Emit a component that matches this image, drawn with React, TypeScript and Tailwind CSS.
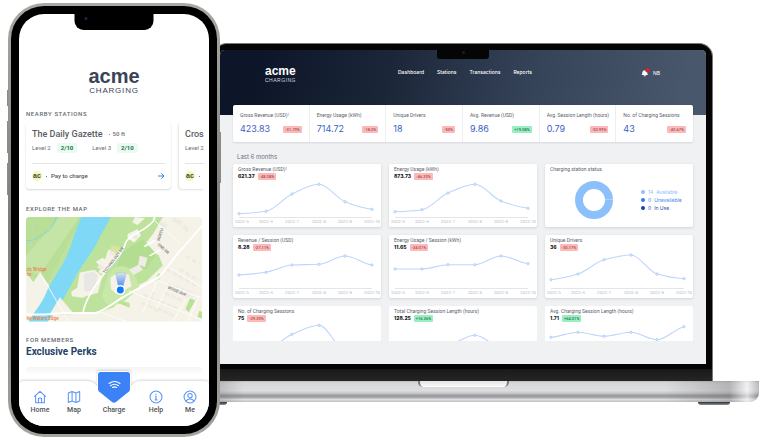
import type { ReactNode } from "react";

const MONTHS = ["2022-5", "2022-6", "2022-7", "2022-8", "2022-9", "2022-10"];
const CHART_X = [6, 33, 59, 86, 112, 139];

type Tone = "down" | "up";

const stats: { label: string; note?: string; value: string; change: string; tone: Tone }[] = [
  { label: "Gross Revenue (USD)", note: "1", value: "423.83", change: "-31.79%", tone: "down" },
  { label: "Energy Usage (kWh)", value: "714.72", change: "-18.2%", tone: "down" },
  { label: "Unique Drivers", value: "18", change: "-50%", tone: "down" },
  { label: "Avg. Revenue (USD)", value: "9.86", change: "+19.08%", tone: "up" },
  { label: "Avg. Session Length (hours)", value: "0.79", change: "-53.99%", tone: "down" },
  { label: "No. of Charging Sessions", value: "43", change: "-42.67%", tone: "down" },
];

type Trend = { label: string; note?: string; value: string; change: string; tone: Tone; points: number[]; peek?: boolean };

const trends: Trend[] = [
  { label: "Gross Revenue (USD)", note: "1", value: "621.37", change: "-48.38%", tone: "down", points: [49.7, 47.3, 30, 20.3, 37.7, 45.3] },
  { label: "Energy Usage (kWh)", value: "873.73", change: "-46.23%", tone: "down", points: [47.7, 45.7, 29, 20.3, 37, 44.3] },
  { label: "Revenue / Session (USD)", value: "8.28", change: "-27.11%", tone: "down", points: [40, 37.3, 30, 29.3, 21, 30] },
  { label: "Energy Usage / Session (kWh)", value: "11.65", change: "-24.01%", tone: "down", points: [34, 34, 29.7, 29.7, 21, 28.7] },
  { label: "Unique Drivers", value: "36", change: "-30.77%", tone: "down", points: [44.7, 39, 24.7, 20, 39, 43.7] },
  { label: "No. of Charging Sessions", value: "75", change: "-29.25%", tone: "down", points: [47, 44, 28.3, 19.3, 45, 49], peek: true },
  { label: "Total Charging Session Length (hours)", value: "128.25", change: "+16.26%", tone: "up", points: [48, 46, 40, 29.3, 42, 46], peek: true },
  { label: "Avg. Charging Session Length (hours)", value: "1.71", change: "+64.31%", tone: "up", points: [31.3, 26.3, 30.3, 26.3, 33.7, 20.7], peek: true },
];

const legend = [
  { count: 14, label: "Available", dot: "bg-[#8cc0fb]", text: "text-[#8cc0fb]" },
  { count: 0, label: "Unavailable", dot: "bg-[#3478f0]", text: "text-[#3f7ff0]" },
  { count: 0, label: "In Use", dot: "bg-[#1e3fa8]", text: "text-[#2b4aa8]" },
];

/* Monotone cubic curve through the points of one series. */
function curve(ys: number[]): string {
  const n = ys.length;
  const slope = (i: number) => (ys[i + 1] - ys[i]) / (CHART_X[i + 1] - CHART_X[i]);
  const tangent = (i: number) => {
    if (i === 0) return slope(0) / 2;
    if (i === n - 1) return slope(n - 2) / 2;
    const a = slope(i - 1);
    const b = slope(i);
    if (a * b <= 0) return 0;
    return (2 * a * b) / (a + b);
  };
  let d = `M${CHART_X[0]},${ys[0]}`;
  for (let i = 0; i < n - 1; i++) {
    const dx = (CHART_X[i + 1] - CHART_X[i]) / 3;
    d += `C${CHART_X[i] + dx},${ys[i] + tangent(i) * dx} ${CHART_X[i + 1] - dx},${ys[i + 1] - tangent(i + 1) * dx} ${CHART_X[i + 1]},${ys[i + 1]}`;
  }
  return d;
}

function Badge({ tone, children }: { tone: Tone; children: ReactNode }) {
  const colours = tone === "up" ? "bg-[#9aeec2] text-[#20744a]" : "bg-[#fbb9b9] text-[#a8484c]";
  return (
    <span className={`rounded-[1px] px-[2px] font-['Roboto','Liberation_Sans',sans-serif] text-[4px] leading-[7px] font-medium ${colours}`}>
      {children}
    </span>
  );
}

function Label({ text, note }: { text: string; note?: string }) {
  return (
    <h3 className="font-['Roboto','Liberation_Sans',sans-serif] text-[5px] leading-[6px] whitespace-nowrap text-[#5b616c]">
      {text}
      {note && <sup className="text-[3px]">{note}</sup>}
    </h3>
  );
}

function TrendCard({ trend }: { trend: Trend }) {
  return (
    <article
      className={`relative bg-white ${trend.peek ? "rounded-t-[2px]" : "rounded-[2px] shadow-[0_1px_3px_rgba(15,23,42,0.14)]"}`}
    >
      <svg viewBox={trend.peek ? "0 0 148 35" : "0 0 148 63"} className="block w-full" role="img" aria-label={trend.label}>
        <path d={curve(trend.points)} fill="none" stroke="#bdd6fb" strokeWidth="1.1" />
        {trend.points.map((y, i) => (
          <circle key={i} cx={CHART_X[i]} cy={y} r="1.2" fill="#dbe9fd" stroke="#a9c9fa" strokeWidth="0.7" />
        ))}
        {!trend.peek && (
          <>
            <path d="M6 53.5H139" stroke="#e4e5e8" strokeWidth="1" />
            {MONTHS.map((m, i) => (
              <text key={m} x={i === 0 ? 9 : CHART_X[i]} y="59" textAnchor="middle" fontSize="4" fill="#b4b7bd">
                {m}
              </text>
            ))}
          </>
        )}
      </svg>
      <div className="absolute top-[2px] left-[5px]">
        <Label text={trend.label} note={trend.note} />
        <p className="flex items-center gap-[3px] pt-px">
          <strong className="text-[5px] leading-[7px] font-extrabold text-[#14171c]">{trend.value}</strong>
          <Badge tone={trend.tone}>{trend.change}</Badge>
        </p>
      </div>
    </article>
  );
}

function StatusCard() {
  return (
    <article className="flex flex-col rounded-[2px] bg-white px-[5px] pt-[2px] shadow-[0_1px_3px_rgba(15,23,42,0.14)]">
      <Label text="Charging station status" />
      <div className="flex items-center gap-7 pt-[9px] pl-[25px]">
        <svg viewBox="0 0 38 38" className="size-[38px]" role="img" aria-label="14 stations available">
          <circle cx="19" cy="19" r="15" fill="none" stroke="#8cc0fb" strokeWidth="8" />
          <path d="M30 18.5H38" stroke="#c5dffc" strokeWidth="0.6" />
        </svg>
        <ul className="flex flex-col gap-px text-[5px] leading-[7px]">
          {legend.map((l) => (
            <li key={l.label} className={`flex items-center gap-[3px] whitespace-nowrap ${l.text}`}>
              <span className={`size-1 rounded-full ${l.dot}`} />
              <span>{l.count}</span>
              <span>{l.label}</span>
            </li>
          ))}
        </ul>
      </div>
    </article>
  );
}

function Dashboard() {
  return (
    <div className="overflow-hidden rounded-t-[5px] bg-[#f0f1f3] pb-[23px] font-['Inter','Liberation_Sans',sans-serif]">
      <header className="flex h-[65px] items-start bg-[linear-gradient(100deg,#0d1629_8%,#1c2639_35%,#36445a_65%,#48576c_95%)] pt-[15px] pr-[46px] pl-[45px] text-white">
        <div className="w-[133px] font-['Liberation_Sans',Arial,sans-serif]">
          <p className="text-[12px] leading-[12px] font-bold">acme</p>
          <p className="text-[5px] leading-[6px] tracking-widest text-[#d5d9e0]">CHARGING</p>
        </div>
        <nav className="flex flex-1 gap-[13px] pt-[3px] text-[5px] leading-[8px] font-medium">
          <a href="#dashboard">Dashboard</a>
          <a href="#stations">Stations</a>
          <a href="#transactions">Transactions</a>
          <a href="#reports">Reports</a>
        </nav>
        <div className="flex items-center gap-[3px] pt-[3px] text-[5px] leading-[8px]">
          <button type="button" aria-label="Notifications">
            <svg viewBox="0 0 16 16" className="size-[9px]">
              <path d="M1 12.500C2.500 11 2 9 2.500 7A4.500 4.500 0 0 1 11 7c.5 2 0 4 1.500 5.500z" fill="#fff" />
              <path d="M4.800 13a2 2 0 0 0 4 0z" fill="#fff" />
              <circle cx="11.500" cy="4" r="4" fill="#d4252b" />
            </svg>
          </button>
          <span>NB</span>
        </div>
      </header>

      <main className="px-[13px]">
        <section className="-mt-[10px] grid grid-cols-6 divide-x divide-[#eceef0] rounded-[2px] bg-white shadow-[0_1px_2px_rgba(15,23,42,0.12)]">
          {stats.map((s) => (
            <div key={s.label} className="px-[7px] py-[7px]">
              <Label text={s.label} note={s.note} />
              <p className="flex items-center justify-between pt-[5px]">
                <span className="text-[9px] leading-[12px] text-[#3b5fc4]">{s.value}</span>
                <Badge tone={s.tone}>{s.change}</Badge>
              </p>
            </div>
          ))}
        </section>

        <h2 className="pt-[11px] pb-[3px] pl-1 text-[6px] leading-[8px] text-[#6b7280]">Last 6 months</h2>
        <section className="grid grid-cols-3 gap-2">
          <TrendCard trend={trends[0]} />
          <TrendCard trend={trends[1]} />
          <StatusCard />
          {trends.slice(2).map((t) => (
            <TrendCard key={t.label} trend={t} />
          ))}
        </section>
      </main>
    </div>
  );
}

function Laptop() {
  return (
    <div className="-ml-[53px] flex-1 pt-10">
      <div className="relative mx-[46px] rounded-t-[14px] border border-b-0 border-[#77797c] bg-[#050505] px-[6px] pt-[6px]">
        <Dashboard />
        <div className="absolute top-[6px] left-1/2 flex h-[9px] w-[52px] -translate-x-1/2 justify-center rounded-b-[3px] bg-[#050505] pt-px">
          <span className="size-[3px] rounded-full bg-[#1b1e22]" />
        </div>
        <div className="-mx-[6px] mt-[5px] h-3 bg-linear-to-b from-[#191919] to-[#252525]" />
      </div>
      <div className="flex h-[21px] justify-center rounded-b-[9px] bg-[linear-gradient(90deg,rgba(70,70,74,0.25)_8%,transparent_13%,transparent_84%,rgba(70,70,74,0.25)_95%,rgba(255,255,255,0.6)_98%,rgba(90,90,94,0.25)_100%),linear-gradient(180deg,#b9babc_0%,#d6d7d9_8%,#dedee0_45%,#c8c9cc_58%,#97989c_70%,#a6a7ab_78%,#dfdfe2_88%,#bfc0c3_100%)]">
        <div className="h-[6px] w-[91px] rounded-b-[5px] border-x-2 border-[#77787b] bg-linear-to-b from-[#e4e4e6] to-[#fbfbfb]" />
      </div>
      <div className="flex justify-between pr-[29px] pl-[28px]">
        <span className="h-[3px] w-8 rounded-b-[3px] bg-linear-to-b from-[#2c2f33] to-[#8f9296]" />
        <span className="h-[3px] w-8 rounded-b-[3px] bg-linear-to-b from-[#2c2f33] to-[#8f9296]" />
      </div>
    </div>
  );
}

function Eyebrow({ children }: { children: ReactNode }) {
  return <h2 className="text-[6px] leading-[8px] font-medium tracking-widest text-[#666a70]">{children}</h2>;
}

function BrandDot() {
  return (
    <span className="flex size-[10px] items-center justify-center rounded-full bg-[#f5f8b4] font-['Liberation_Sans',Arial,sans-serif] text-[7px] leading-[8px] font-bold text-[#3d4453]">
      ac
    </span>
  );
}

function StationCard() {
  return (
    <article className="w-[145px] shrink-0 rounded-[4px] bg-white px-[6px] pt-[6px] pb-2 text-[6px] leading-[10px] text-[#6d7075] shadow-[0_1px_2px_rgba(0,0,0,0.16)]">
      <div className="flex items-center gap-[6px]">
        <h3 className="text-[9px] leading-[12px] font-medium whitespace-nowrap text-[#5a5d62]">The Daily Gazette</h3>
        <span className="flex items-center gap-[3px] font-medium whitespace-nowrap">
          <span className="size-px rounded-full bg-[#6d7075]" />
          50 ft
        </span>
      </div>
      <div className="flex gap-[15px] pt-[3px] pb-[10px]">
        {["Level 2", "Level 3"].map((level) => (
          <p key={level} className="flex gap-[6px] whitespace-nowrap">
            {level}
            <span className="rounded-[2px] bg-[#e9fcf1] px-1 font-bold text-[#24704b]">2/10</span>
          </p>
        ))}
      </div>
      <div className="flex items-center border-t border-[#e3e4e6] pt-[7px]">
        <BrandDot />
        <span className="flex flex-1 items-center gap-1 pl-1 font-medium text-[#505358]">
          <span className="size-px rounded-full bg-[#505358]" />
          Pay to charge
        </span>
        <svg viewBox="0 0 8 8" className="size-2" fill="none" stroke="#3b82f6" strokeWidth="1">
          <path d="M1 4h6M4.300 1.400 7 4 4.300 6.600" />
        </svg>
      </div>
    </article>
  );
}

/* Leading edge of the next card in the carousel. */
function NextStationCard() {
  return (
    <article className="flex-1 rounded-l-[4px] bg-white pt-[6px] pb-2 pl-[6px] text-[6px] leading-[10px] whitespace-nowrap text-[#6d7075] shadow-[-1px_1px_2px_rgba(0,0,0,0.12)]">
      <h3 className="text-[9px] leading-[12px] font-medium text-[#5a5d62]">Cros</h3>
      <p className="pt-[3px] pb-[10px]">Level 2</p>
      <div className="flex items-center gap-1 border-t border-[#e3e4e6] pt-[7px]">
        <BrandDot />
        <span className="size-px rounded-full bg-[#505358]" />
      </div>
    </article>
  );
}

function TownMap() {
  return (
    <svg viewBox="78 33 530 315" className="block w-full rounded-[4px]" role="img" aria-label="Map of nearby stations">
      <rect x="78" y="33" width="530" height="315" fill="#f5f2e8" />
      <path d="M78 33h412l-26 46-30 40 44 30 12 30-48 46-66 34-34 46-52 18-110 4-40-60-20-12-42-55z" fill="#bde29c" />
      <path d="M78 33h170L140 235 78 190z" fill="#b9df97" />
      <path d="M180 33 78 150v40l40 20 120-177z" fill="#c5e5a6" />
      <path d="M78 103c30 4 38-12 50-18 14-6 22-12 30-24l12-28" fill="none" stroke="#83d3dc" strokeWidth="3" />
      <path d="M98 33v60l-14 80" fill="none" stroke="#cfd9c0" strokeWidth="1.500" />
      <path d="M120 200 78 262v86h50l26-100z" fill="#f5f2e8" />
      <path d="M364 140l66-40 40 44-30 46-44-2-54 30z" fill="#b3dd90" />
      <path d="M246 33h86c-8 26-26 44-36 70-12 28-50 74-68 108-14 28-36 66-48 88-12 20-26 34-36 49H86c16-30 42-56 54-90 18-40 52-82 66-120 14-34 22-74 40-105z" fill="#7fd8f5" />
      <path d="M180 275l40 46-60 4-8-4z" fill="#f5f2e8" />
      <path d="M240 200l44-8 24 20-14 50-32 8-14 6-32-4-2-14 18-12z" fill="#f5f2e8" />
      <path d="M252 204l28-6 14 10-10 46-30 4z" fill="#e9e7e4" />
      <path d="M288 168l20-12 8 4 10-28 22-6 18 14-30 40-24 26-16-6 8-16z" fill="#f5f2e8" />
      <path d="M336 118l28 6-12 24-22-10z" fill="#d9e3a4" />
      <path d="M384 84l30-14 10 18-20 22-20-12z" fill="#f7f5ed" />
      <path d="M406 33l30 4-22 20-16-8z" fill="#f5f2e8" />
      <path d="M326 206c20-34 60-30 78-4l16 44-48 44-44 14-22-30z" fill="#c9e7a8" />
      <path d="M332 216c18-16 40-20 56-8l8 34-48 22-14-14z" fill="#f5f2e8" />
      <path d="M388 192l30-16 12 16-28 16zM420 150l24 6-8 28-20-8z" fill="#efece6" />
      <path d="M572 278l16 6-20 36-10-10zM600 315l8 4v20l-14-4zM486 205l-10 24-8-6 8-20zM350 282l40 10v14l-30-12z" fill="#b9e296" />
      <g fill="none" stroke="#eeebe3" strokeWidth="9">
        <path d="M432 268l60 26M426 292l50 22M462 258l-18 36M496 262l54 24M484 288l54 24M474 308l50 22M520 250l60 26M504 236l80 26" strokeDasharray="16 4" />
        <path d="M540 190l50 30M500 190l90 50M560 150l40 26" strokeDasharray="14 8" />
        <path d="M480 50l22 12M520 40l28 12M552 60l14 14M400 88l14 8M296 180l14 8M330 140l14 6" strokeWidth="13" />
      </g>
      <g fill="none" stroke="#fff" strokeWidth="4">
        <path d="M78 326c60 4 90-4 120-4h90c30-8 60-36 90-52l100-56c30-30 48-66 76-92l54-62" strokeWidth="6" />
        <path d="M250 320c8-44 40-86 60-112 22-30 60-62 68-98 10-24 60-34 84-66l4-11" strokeWidth="5" />
        <path d="M388 256l220 86M470 222l138 56M510 185l98 60M478 215l-14 32-36 74M600 270l-36 78M460 36c20 30 70 60 82 78M560 280l-40 68M500 250l-30 60M300 318l80 30M120 200l58 100 30 48" strokeWidth="2.500" />
        <path d="M434 122l32-18M450 150l32-18" strokeWidth="5" />
      </g>
      <g fontFamily="Roboto, sans-serif" fontSize="12" fontWeight="500" fill="#77777c">
        <text x="316" y="204" transform="rotate(-53 316 204)">TECHNOLOGY DR</text>
        <text x="504" y="248" transform="rotate(24 504 248)">WOOD AVE</text>
        <text x="480" y="106" transform="rotate(-72 480 106)">NORTH</text>
        <text x="474" y="118" transform="rotate(42 474 118)">END DR</text>
      </g>
      <g fontFamily="Roboto, sans-serif" fontSize="14" fontWeight="500" fill="#f0804a">
        <text x="80" y="196">n's Bridge</text>
        <text x="80" y="211">ns</text>
        <text x="80" y="344">he Waters Edge</text>
      </g>
      <defs>
        <linearGradient id="beam" x1="0" y1="0" x2="0" y2="1">
          <stop offset="0" stopColor="#3b82f6" stopOpacity="0.1" />
          <stop offset="1" stopColor="#3b82f6" stopOpacity="0.9" />
        </linearGradient>
      </defs>
      <path d="M346 202q18-8 36 0l-12 42h-14z" fill="url(#beam)" />
      <circle cx="362" cy="253" r="15" fill="#fff" />
      <circle cx="362" cy="253" r="10.500" fill="#0f7af5" />
    </svg>
  );
}

const tabs = [
  {
    label: "Home",
    icon: <path d="M1.500 7.500 8 1.500l6.500 6M3 6.300v8.200h10V6.300M6.200 14.500v-5h3.600v5" />,
  },
  {
    label: "Map",
    icon: <path d="M1.500 3.500 5.800 1.800l4.400 1.700 4.300-1.700v10.700l-4.300 1.700-4.400-1.700-4.300 1.700zM5.800 1.800v10.700M10.200 3.500v10.700" />,
  },
  { label: "Charge", icon: null },
  {
    label: "Help",
    icon: (
      <>
        <circle cx="8" cy="8" r="6.800" />
        <path d="M6.800 7.200H8v4M6.600 11.300h3M8 4.400v1.200" />
      </>
    ),
  },
  {
    label: "Me",
    icon: (
      <>
        <circle cx="8" cy="8" r="6.800" />
        <circle cx="8" cy="6.500" r="2.500" />
        <path d="M3.600 13c.6-2 2-2.700 4.400-2.700s3.800.7 4.400 2.700" />
      </>
    ),
  },
];

function TabBar() {
  return (
    <nav className="relative -mt-[4px]">
      <svg viewBox="0 0 190 56" className="absolute inset-x-0 bottom-0 w-full overflow-visible drop-shadow-[0_-1px_1px_rgba(0,0,0,0.16)]" aria-hidden="true">
        <path d="M0 14Q1 11 5 11H69Q73 11 76 14L91 29Q95 33 99 29L114 14Q117 11 121 11H185Q189 11 190 14V56H0z" fill="#fff" />
        <path d="M78 4Q78 1 81 1H109Q112 1 112 4V20Q112 22 110 23L97 33Q95 34 93 33L80 23Q78 22 78 20z" fill="#fff" />
        <path d="M79 4.500Q79 2 81.500 2H108.500Q111 2 111 4.500V19Q111 20.500 110 21.500L97 32Q95 33.500 93 32L80 21.500Q79 20.500 79 19z" fill="#3b82f6" />
        <g fill="none" stroke="#fff" strokeWidth="1.100" strokeLinecap="round">
          <path d="M90 13.500Q95.500 9.500 101 13.500M91.500 15.700Q95.500 12.800 99.500 15.700M93.500 17.500Q95.500 16.200 97.500 17.500" />
        </g>
      </svg>
      <ul className="relative grid grid-cols-[34px_34px_46px_38px_30px] px-1 pt-[7px] pb-3 text-[7px] leading-[8px] font-medium text-[#505358]">
        {tabs.map((t) => (
          <li key={t.label}>
            <button type="button" className="flex w-full flex-col items-center gap-[2px]">
              {t.icon ? (
                <svg viewBox="0 0 16 16" className="size-[14px]" fill="none" stroke="#5b93f7" strokeWidth="1.200" strokeLinejoin="round">
                  {t.icon}
                </svg>
              ) : (
                <span className="h-[14px]" />
              )}
              {t.label}
            </button>
          </li>
        ))}
      </ul>
    </nav>
  );
}

function Phone() {
  return (
    <div className="relative z-10 w-[212px] shrink-0 rounded-[36px] bg-linear-to-b from-[#a9aaa3] via-[#7d7e78] to-[#a3a49d] p-[3px]">
      <span className="absolute top-[87px] -left-px h-4 w-px bg-[#8b8c86]" />
      <span className="absolute top-[118px] -left-px h-8 w-px bg-[#8b8c86]" />
      <span className="absolute top-[160px] -left-px h-8 w-px bg-[#8b8c86]" />
      <span className="absolute top-[129px] -right-px h-[51px] w-px bg-[#8b8c86]" />
      <div className="rounded-[33px] bg-black p-2">
        <div className="relative flex flex-col overflow-hidden rounded-[25px] bg-white font-['Roboto','Liberation_Sans',sans-serif]">
          <div className="absolute top-0 left-1/2 h-4 w-[79px] -translate-x-1/2 rounded-b-[9px] bg-black pt-[3px] pl-[10px]">
            <span className="block size-[3px] rounded-full bg-[#16294a]" />
          </div>
          <div className="flex flex-col items-center pt-[51px] pb-[15px] font-['Liberation_Sans',Arial,sans-serif] text-[#3a4458]">
            <p className="text-[20px] leading-[22px] font-bold">acme</p>
            <p className="text-[8px] leading-[8px] font-medium tracking-widest">CHARGING</p>
          </div>
          <div className="px-[7px]">
            <Eyebrow>NEARBY STATIONS</Eyebrow>
            <div className="flex gap-2 pt-1 pb-4">
              <StationCard />
              <NextStationCard />
            </div>
            <div className="pb-1">
              <Eyebrow>EXPLORE THE MAP</Eyebrow>
            </div>
            <TownMap />
            <div className="pt-[14px]">
              <Eyebrow>FOR MEMBERS</Eyebrow>
            </div>
            <p className="pt-[2px] text-[10px] leading-[12px] font-bold text-[#234466]">Exclusive Perks</p>
            <div className="mt-[9px] h-5 rounded-t-[4px] bg-linear-to-b from-[#f5f5f6] to-white to-40%" />
          </div>
          <TabBar />
        </div>
      </div>
    </div>
  );
}

export default function App() {
  return (
    <div className="flex items-start overflow-hidden bg-white pt-[3px] pr-[9px] pb-1 pl-2">
      <Phone />
      <Laptop />
    </div>
  );
}
